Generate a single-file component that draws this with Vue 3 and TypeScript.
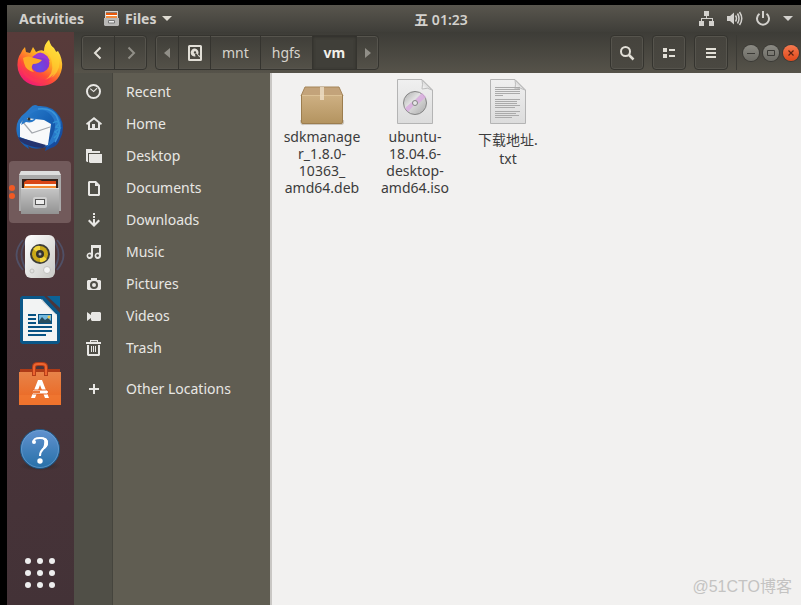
<script setup lang="ts">
interface Place {
  name: string
  path: string
  separated?: boolean
}

interface FileEntry {
  kind: 'package' | 'disc' | 'text'
  lines: string[]
  cjk?: boolean
}

const places: Place[] = [
  {
    name: 'Recent',
    path: 'M7.5 0A7.5 7.5 0 1 0 7.5 15A7.5 7.5 0 1 0 7.5 0ZM7.5 2A5.5 5.5 0 1 1 7.5 13A5.5 5.5 0 1 1 7.5 2ZM4.6 4.3L7.6 6.7L10.7 3.7L11.5 4.5L7.7 8.3L3.9 5.1Z',
  },
  {
    name: 'Home',
    path: 'M8 1L16 7.4L15 9L14 8.2V14H2V8.2L1 9L0 7.4ZM8 3.5L4 6.7V12H6V8H9V12H12V6.7Z',
  },
  {
    name: 'Desktop',
    path: 'M0 1H6V3H14V5H2V14H1L0 13ZM3 6H16V15H4L3 14Z',
  },
  {
    name: 'Documents',
    path: 'M3 1H10L14 5V15L13 16H3L2 15V2ZM4 3V14H12V6H9V3Z',
  },
  {
    name: 'Downloads',
    path: 'M7 1H9V3H7ZM7 4H9V6H7ZM7 7H9V11L12.5 7.5L14 9L8 15L2 9L3.5 7.5L7 11Z',
  },
  {
    name: 'Music',
    path: 'M5 1H15V11.5A3.2 3.2 0 1 1 13 8.8V4H7V11.5A3.2 3.2 0 1 1 5 8.8ZM3.5 10.2A1.4 1.4 0 1 0 3.5 13A1.4 1.4 0 1 0 3.5 10.2ZM11.6 10.2A1.4 1.4 0 1 0 11.6 13A1.4 1.4 0 1 0 11.6 10.2Z',
  },
  {
    name: 'Pictures',
    path: 'M5 2H11V4H14L15 5V13L14 14H2L1 13V5L2 4H5ZM8 5A4 4 0 1 0 8 13A4 4 0 1 0 8 5ZM8 7A2 2 0 1 1 8 11A2 2 0 1 1 8 7Z',
  },
  {
    name: 'Videos',
    path: 'M1 4L5 7V5L6 4H14L15 5V12L14 13H6L5 12V10L1 13Z',
  },
  {
    name: 'Trash',
    path: 'M4 0H12V2H15V4H0V2H4ZM5 1.2V2H11V1.2ZM1 5H3V14H12V5H14V15L13 16H2L1 15ZM5 6H6V12H5ZM7 6H8V12H7ZM9 6H10V12H9Z',
  },
  {
    name: 'Other Locations',
    path: 'M7 3H9V7H13V9H9V13H7V9H3V7H7Z',
    separated: true,
  },
]

const files: FileEntry[] = [
  { kind: 'package', lines: ['sdkmanage', 'r_1.8.0-', '10363_', 'amd64.deb'] },
  { kind: 'disc', lines: ['ubuntu-', '18.04.6-', 'desktop-', 'amd64.iso'] },
  { kind: 'text', lines: ['下载地址.', 'txt'], cjk: true },
]

const gridDots = [10, 22, 34]
const textRows = [
  [9, 25], [11, 25], [13, 25], [15, 25], [17, 8],
  [21, 25], [23, 22], [25, 22], [27, 25], [29, 20],
  [33, 25], [35, 21], [37, 24], [39, 17],
]
</script>

<template>
  <div class="desktop">
    <header class="panel">
      <div class="panel-left">
        <button class="panel-btn">Activities</button>
        <button class="panel-btn app-menu">
          <svg width="15" height="15" viewBox="0 0 15 15">
            <path d="M1 0H14V7H1Z" fill="#d8d5d0" />
            <path d="M2 1.5H13V7H2Z" fill="#4b2b1c" />
            <path d="M2 2H13V4H2Z" fill="#e8590c" />
            <path d="M2 4H13V5H2Z" fill="#fff" />
            <path d="M2 5H13V7H2Z" fill="#f38b3c" />
            <path d="M0 7H15V14L14 15H1L0 14Z" fill="#b9b8b6" />
            <path d="M4.5 9.5H10.5V12H4.5Z" fill="#eee" stroke="#777" />
          </svg>
          <span>Files</span>
          <svg width="10" height="5" viewBox="0 0 10 5"><path d="M0 0H10L5 5Z" fill="#dfdbd2" /></svg>
        </button>
      </div>
      <time class="clock">五 01:23</time>
      <button class="status" aria-label="System">
        <svg width="16" height="16" viewBox="0 0 16 16" fill="#d3d1cd">
          <path d="M5 0H10V5H8V7H14V10H15V15H10V10H13V8H3V10H5V15H0V10H2V7H7V5H5Z" />
        </svg>
        <svg width="16" height="16" viewBox="0 0 16 16">
          <path d="M0 5H3L7 1.5V13.5L3 10H0Z" fill="#d3d1cd" />
          <path d="M8.5 4.5Q10.5 7.5 8.5 10.5M10.5 2.5Q13.5 7.5 10.5 12.5M12.5 1Q17 7.5 12.5 14" fill="none" stroke="#d3d1cd" stroke-width="1.5" />
        </svg>
        <svg width="16" height="16" viewBox="0 0 16 16" fill="none" stroke="#d3d1cd" stroke-width="2">
          <path d="M8 0V7M4.5 2.8A6 6 0 1 0 11.5 2.8" />
        </svg>
        <svg width="10" height="5" viewBox="0 0 10 5"><path d="M0 0H10L5 5Z" fill="#d3d1cd" /></svg>
      </button>
    </header>

    <div class="workspace">
      <nav class="dock" aria-label="Applications">
        <button class="launcher" aria-label="Firefox">
          <svg width="48" height="48" viewBox="0 0 48 48">
            <defs>
              <linearGradient id="fox" x1="0.8" y1="0.1" x2="0.25" y2="1">
                <stop offset="0" stop-color="#fff04a" />
                <stop offset="0.35" stop-color="#ffad22" />
                <stop offset="0.65" stop-color="#ff4e36" />
                <stop offset="1" stop-color="#f0157c" />
              </linearGradient>
              <radialGradient id="globe" cx="0.45" cy="0.7" r="0.8">
                <stop offset="0" stop-color="#654de8" />
                <stop offset="0.55" stop-color="#8137d2" />
                <stop offset="1" stop-color="#b833c8" />
              </radialGradient>
            </defs>
            <path d="M5 13Q6 10 9 7L10 12L14 13L17 7Q19 10 20 12Q25 9 28 11Q28 4 33 0Q34 5 38 8L40 12L42 11Q47 19 46 28Q43 45 25 46Q7 46 2 30Q0 19 5 13Z" fill="url(#fox)" />
            <path d="M29 11Q29 4 33 0Q34 6 39 10Q45 17 43 27Q40 38 29 40Q38 34 36 23Q35 16 29 11Z" fill="#ffd632" opacity="0.65" />
            <circle cx="24" cy="23" r="9.5" fill="url(#globe)" />
            <path d="M18 16Q24 9 31 16L34 21Q28 17 22 18Z" fill="#9a38d5" />
            <path d="M7 18Q12 15 18 18L26 20Q23 24 17 24Q14 28 18 32Q10 31 8 23Z" fill="#ffaa26" />
            <path d="M4 19Q6 34 17 38Q29 43 38 34Q31 47 16 41Q4 35 4 19Z" fill="#ff3656" opacity="0.65" />
          </svg>
        </button>
        <button class="launcher" aria-label="Thunderbird">
          <svg width="50" height="50" viewBox="0 0 50 50">
            <defs>
              <linearGradient id="bird" x1="0" y1="0" x2="1" y2="1">
                <stop offset="0" stop-color="#3187d5" />
                <stop offset="0.5" stop-color="#1763b6" />
                <stop offset="1" stop-color="#173f91" />
              </linearGradient>
            </defs>
            <path d="M15 5Q19 0 23 3Q38 2 45 14Q51 25 45 36Q42 44 36 45L30 48L31 44Q19 48 13 43L14 46Q4 40 2 31Q-1 18 10 10Z" fill="url(#bird)" />
            <path d="M5 21L11 15L29 17L36 21L33 42L28 43L5 34Z" fill="#f8f9fa" />
            <path d="M7 18L17 30L35 24" fill="none" stroke="#a4a8ae" stroke-width="1.2" />
            <path d="M3 34L31 42L28 45Q12 44 5 38Z" fill="#24346f" />
            <path d="M12 16Q15 10 21 8Q29 5 36 12Q43 20 38 31L32 44Q45 37 46 25Q47 11 32 5Q18 2 10 12L6 22L11 19Q20 21 22 13Q18 19 12 16Z" fill="#2878c9" />
            <path d="M23 6Q39 4 43 17Q47 28 40 39" fill="none" stroke="#3a94d8" stroke-width="1.5" />
            <path d="M38 20Q42 17 44 20L41 24L45 25L40 29L43 31L39 35" fill="none" stroke="#3292d4" stroke-width="1.5" />
            <circle cx="14" cy="16" r="1.5" fill="#3b3327" />
          </svg>
        </button>
        <button class="launcher active" aria-label="Files">
          <svg width="48" height="48" viewBox="0 0 48 48">
            <defs>
              <linearGradient id="drawer" x1="0" y1="0" x2="0" y2="1">
                <stop offset="0" stop-color="#c6c6c6" />
                <stop offset="1" stop-color="#929292" />
              </linearGradient>
            </defs>
            <path d="M5 3H43L45 8V43H3V8Z" fill="#aaa" />
            <path d="M5 3H43L45 7H3Z" fill="#dedede" />
            <path d="M6 11H42V21H6Z" fill="#34221c" />
            <path d="M8 14L11 12H24L26 13H40V21H8Z" fill="#d94616" />
            <path d="M8 16H40V21H8Z" fill="#f58a32" />
            <path d="M9 16H40V18H9Z" fill="#fff3e6" />
            <path d="M5 20H43V46H5Z" fill="url(#drawer)" />
            <path d="M5 20H43V21H5Z" fill="#e4e4e4" />
            <rect x="17" y="29" width="14" height="11" rx="2" fill="#d0d0d0" />
            <rect x="19.5" y="31.5" width="9" height="5" fill="#eee" stroke="#555" />
          </svg>
        </button>
        <button class="launcher" aria-label="Rhythmbox">
          <svg width="50" height="48" viewBox="0 0 50 48">
            <defs>
              <linearGradient id="speaker" x1="0" y1="0" x2="1" y2="1">
                <stop offset="0" stop-color="#fff" />
                <stop offset="1" stop-color="#c9c9c5" />
              </linearGradient>
            </defs>
            <path d="M8 8Q-5 23 8 38M12 7Q1 22 12 39M42 8Q55 23 42 38M38 7Q49 22 38 39" fill="none" stroke="#526991" stroke-width="1.8" opacity="0.5" />
            <rect x="10" y="3" width="30" height="43" rx="6" fill="url(#speaker)" />
            <circle cx="25" cy="22" r="10" fill="#3d3d37" />
            <circle cx="25" cy="22" r="8" fill="#c9a817" />
            <path d="M25 22L18 17Q21 13 25 14ZM25 22L32 27Q29 31 25 30Z" fill="#f1d53f" />
            <circle cx="25" cy="22" r="4" fill="#33332e" />
            <circle cx="25" cy="22" r="1.5" fill="#aaa" />
            <circle cx="32" cy="38" r="3.5" fill="#f4f4f4" stroke="#c3c3bf" />
            <circle cx="17" cy="39" r="2" fill="none" stroke="#c2c2be" />
          </svg>
        </button>
        <button class="launcher" aria-label="LibreOffice Writer">
          <svg width="48" height="48" viewBox="0 0 48 48">
            <path d="M6 0H28L44 17V46L42 48H6L4 46V2Z" fill="#0b5788" />
            <path d="M31 0H44V12Z" fill="#0c6296" />
            <path d="M7 3H25L41 19V45H7Z" fill="#f2f3f3" />
            <path d="M26 3V5L39 18H41V20Z" fill="#c8cdd0" />
            <path d="M12 18H20V20H12ZM12 22H20V24H12ZM12 26H20V28H12ZM12 30H36V32H12ZM12 34H36V36H12ZM12 38H30V40H12Z" fill="#075283" />
            <path d="M22 18H36V28H22Z" fill="#075283" />
            <path d="M23 19H35V27H23Z" fill="#73b9de" />
            <path d="M23 27V25L26 21L29 24L32 22L35 25V27Z" fill="#274c5d" />
            <circle cx="33" cy="21" r="1.5" fill="#ecc84a" />
          </svg>
        </button>
        <button class="launcher" aria-label="Ubuntu Software">
          <svg width="48" height="48" viewBox="0 0 48 48">
            <defs>
              <linearGradient id="bag" x1="0" y1="0" x2="0" y2="1">
                <stop offset="0" stop-color="#e78349" />
                <stop offset="1" stop-color="#ec641d" />
              </linearGradient>
            </defs>
            <path d="M4 9H44V15H4Z" fill="#ae3b17" />
            <path d="M3 12H45V45H3Z" fill="url(#bag)" />
            <path d="M3 35H45V45H3Z" fill="#f17933" opacity="0.7" />
            <path d="M18 16V7Q18 4 22 4H26Q30 4 30 7V16" fill="none" stroke="#b53e18" stroke-width="4" />
            <path d="M18 15V7Q18 4 22 4H26Q30 4 30 7V15" fill="none" stroke="#ec6530" stroke-width="2" />
            <path d="M22 20H26L33 38H29L24 25L19 38H15Z" fill="#fff" />
            <rect x="15.5" y="30" width="17" height="4" rx="2" fill="#fff" stroke="#e5601f" />
            <path d="M16 31H24V33H16Z" fill="#ec7637" />
          </svg>
        </button>
        <button class="launcher" aria-label="Help">
          <svg width="48" height="48" viewBox="0 0 48 48">
            <defs>
              <linearGradient id="help" x1="0" y1="0" x2="0" y2="1">
                <stop offset="0" stop-color="#6292cf" />
                <stop offset="1" stop-color="#2670a8" />
              </linearGradient>
              <radialGradient id="help-shadow">
                <stop offset="0.4" stop-color="#29272b" stop-opacity="0.5" />
                <stop offset="1" stop-color="#29272b" stop-opacity="0" />
              </radialGradient>
            </defs>
            <ellipse cx="24" cy="42" rx="21" ry="5" fill="url(#help-shadow)" />
            <circle cx="24" cy="25" r="19.5" fill="url(#help)" stroke="#1c5685" />
            <circle cx="24" cy="25" r="18.5" fill="none" stroke="#75a7d6" opacity="0.6" />
            <path d="M17.5 18Q17 14 24 14Q31 14 31 19Q31 22 27 25Q24 28 24 32" fill="none" stroke="#fff" stroke-width="2" />
            <path d="M24 13Q33 13 32 20Q31 24 26 26Q29 20 28 16Z" fill="#fff" />
            <circle cx="18" cy="18" r="2" fill="#fff" />
            <circle cx="24" cy="37" r="2.7" fill="#fff" />
          </svg>
        </button>
        <button class="launcher show-apps" aria-label="Show Applications">
          <svg width="44" height="44" viewBox="0 0 44 44" fill="#eee">
            <template v-for="y in gridDots" :key="y">
              <circle v-for="x in gridDots" :key="x" :cx="x" :cy="y" r="3" />
            </template>
          </svg>
        </button>
      </nav>

      <section class="window">
        <div class="toolbar">
          <div class="group">
            <button class="tool nav" aria-label="Back">
              <svg width="16" height="16" viewBox="0 0 16 16"><path d="M10.5 2.5L5 8L10.5 13.5" fill="none" stroke="#e2dfd7" stroke-width="2" /></svg>
            </button>
            <button class="tool nav" aria-label="Forward" disabled>
              <svg width="16" height="16" viewBox="0 0 16 16"><path d="M5.5 2.5L11 8L5.5 13.5" fill="none" stroke="#918f88" stroke-width="2" /></svg>
            </button>
          </div>
          <div class="group path">
            <button class="tool scroll" aria-label="Scroll left">
              <svg width="6" height="10" viewBox="0 0 6 10"><path d="M6 0V10L0 5Z" fill="#918f88" /></svg>
            </button>
            <button class="tool disk" aria-label="Computer">
              <svg width="16" height="16" viewBox="0 0 16 16">
                <rect x="2" y="1" width="12" height="14" rx="0.5" fill="none" stroke="#e2dfd7" stroke-width="2" />
                <path d="M8 3.5A4 4 0 1 0 8.5 11.4L8 9L9.5 8.5L12.5 12.5L13 11L11 9.5A4 4 0 0 0 8 3.5ZM8 6.2A1.2 1.2 0 1 1 8 8.6A1.2 1.2 0 1 1 8 6.2Z" fill="#e2dfd7" fill-rule="evenodd" />
              </svg>
            </button>
            <button class="tool crumb">mnt</button>
            <button class="tool crumb">hgfs</button>
            <button class="tool crumb current">vm</button>
            <button class="tool scroll" aria-label="Scroll right">
              <svg width="6" height="10" viewBox="0 0 6 10"><path d="M0 0V10L6 5Z" fill="#918f88" /></svg>
            </button>
          </div>
          <div class="actions">
            <button class="tool single" aria-label="Search">
              <svg width="16" height="16" viewBox="0 0 16 16" fill="none" stroke="#e2dfd7"><circle cx="6.5" cy="6.5" r="4.5" stroke-width="2" /><path d="M10 10L14.5 14.5" stroke-width="2.5" /></svg>
            </button>
            <button class="tool single" aria-label="View options">
              <svg width="16" height="16" viewBox="0 0 16 16" fill="#e2dfd7"><path d="M2 3H6V7H2ZM8 4H14V6H8ZM2 9H6V13H2ZM8 10H14V12H8Z" /></svg>
            </button>
            <button class="tool single" aria-label="Menu">
              <svg width="16" height="16" viewBox="0 0 16 16" fill="#e2dfd7"><path d="M3 3H13V5H3ZM3 7H13V9H3ZM3 11H13V13H3Z" /></svg>
            </button>
            <div class="controls">
              <button class="control" aria-label="Minimize"><svg width="8" height="8" viewBox="0 0 8 8"><path d="M0 4.5H8" stroke="#3b3a36" /></svg></button>
              <button class="control" aria-label="Maximize"><svg width="8" height="8" viewBox="0 0 8 8"><path d="M0.5 1.5H7.5V6.5H0.5Z" fill="none" stroke="#3b3a36" /></svg></button>
              <button class="control close" aria-label="Close"><svg width="8" height="8" viewBox="0 0 8 8"><path d="M1.5 1.5L6.5 6.5M6.5 1.5L1.5 6.5" stroke="#5a2212" stroke-width="1.2" /></svg></button>
            </div>
          </div>
        </div>

        <div class="body">
          <nav class="sidebar" aria-label="Places">
            <a v-for="place in places" :key="place.name" href="#" class="place" :class="{ separated: place.separated }">
              <svg width="16" height="16" viewBox="0 0 16 16"><path :d="place.path" fill="#e8e7e4" fill-rule="evenodd" /></svg>
              <span class="place-name">{{ place.name }}</span>
            </a>
          </nav>
          <main class="files">
            <button v-for="file in files" :key="file.kind" class="file">
              <svg v-if="file.kind === 'package'" width="48" height="48" viewBox="0 0 48 48">
                <defs>
                  <linearGradient id="box" x1="0" y1="0" x2="0" y2="1">
                    <stop offset="0" stop-color="#ceb083" />
                    <stop offset="1" stop-color="#b3935f" />
                  </linearGradient>
                </defs>
                <path d="M2 42Q2 48 6 47H43Q47 47 46 42Z" fill="#a49b8d" opacity="0.5" />
                <path d="M7 9H41L45 18H3Z" fill="#c3a37a" stroke="#a58559" />
                <path d="M3 17H45V44L44 46H4L3 44Z" fill="url(#box)" />
                <path d="M3.5 17V44L4.5 45.5H43.5L44.5 44V17" fill="none" stroke="#9c7d4e" />
                <path d="M4 17.5H44" stroke="#dcc195" />
                <path d="M22 9H26V22H22Z" fill="#eddfc8" opacity="0.8" />
              </svg>
              <svg v-else width="48" height="48" viewBox="0 0 48 48">
                <defs>
                  <linearGradient :id="'paper-' + file.kind" x1="0" y1="0" x2="0" y2="1">
                    <stop offset="0" stop-color="#f0f0f0" />
                    <stop offset="1" stop-color="#dcdcdc" />
                  </linearGradient>
                  <linearGradient :id="'fold-' + file.kind" x1="0" y1="1" x2="1" y2="0">
                    <stop offset="0" stop-color="#fff" />
                    <stop offset="0.6" stop-color="#d2d2d2" />
                  </linearGradient>
                  <linearGradient id="disc" x1="0" y1="0" x2="1" y2="1">
                    <stop offset="0" stop-color="#aaa" />
                    <stop offset="0.4" stop-color="#e2e2e2" />
                    <stop offset="1" stop-color="#aaa" />
                  </linearGradient>
                </defs>
                <path d="M6.5 1.5H31L41.5 12V45.5H6.5Z" :fill="'url(#paper-' + file.kind + ')'" stroke="#b4b4b4" />
                <path d="M31 2Q32 6 31 11Q37 9 41 12Z" :fill="'url(#fold-' + file.kind + ')'" stroke="#bdbdbd" />
                <g v-if="file.kind === 'disc'">
                  <circle cx="24" cy="25" r="11.5" fill="url(#disc)" stroke="#858585" />
                  <path d="M14 30L21.5 23.5L24 26L17 34ZM24 22L31 15L35 19L27 26Z" fill="#d9aae0" opacity="0.8" />
                  <circle cx="24" cy="25" r="2.5" fill="#e6e6e6" stroke="#858585" />
                </g>
                <g v-else>
                  <rect v-for="row in textRows" :key="row[0]" x="11" :y="row[0]" :width="row[1]" height="1" fill="#aaa" />
                </g>
              </svg>
              <span class="label" :class="{ cjk: file.cjk }">{{ file.lines.join('\n') }}</span>
            </button>
            <p class="credit">@51CTO博客</p>
          </main>
        </div>
      </section>
    </div>
  </div>
</template>

<style>
body {
  margin: 0;
  background: #000;
}
</style>

<style scoped>
.desktop {
  box-sizing: border-box;
  min-height: 100vh;
  padding: 5px 0 0 7px;
  display: flex;
  flex-direction: column;
  background: #000;
  font-family: "Noto Sans", "Noto Sans CJK SC", sans-serif;
  font-size: 14px;
  color: #e3e1dc;
}

svg {
  display: block;
  flex: none;
}

button {
  margin: 0;
  padding: 0;
  border: 0;
  background: none;
  color: inherit;
  font: inherit;
}

.panel {
  height: 27px;
  display: grid;
  grid-template-columns: 11fr auto 9fr;
  align-items: center;
  background: linear-gradient(#59564e, #3f3e39);
  color: #d3d1cd;
  font-weight: 600;
}

.panel-left {
  display: flex;
  gap: 20px;
  padding-left: 12px;
  font-weight: 700;
}

.app-menu {
  display: flex;
  align-items: center;
  gap: 6px;
}

.status {
  justify-self: end;
  display: flex;
  align-items: center;
  gap: 12px;
  padding-right: 8px;
}

.workspace {
  flex: 1;
  display: flex;
}

.dock {
  flex: none;
  width: 67px;
  box-sizing: border-box;
  padding: 1px 3px 1px 2px;
  display: flex;
  flex-direction: column;
  align-items: center;
  gap: 2px;
  background: linear-gradient(#583b3a, #4c353a 50%, #433237);
}

.launcher {
  width: 62px;
  height: 62px;
  display: grid;
  place-items: center;
  border-radius: 4px;
}

.launcher.active {
  position: relative;
  background: #725a5b;
}

.launcher.active::before,
.launcher.active::after {
  content: "";
  position: absolute;
  left: 0;
  width: 6px;
  height: 6px;
  border-radius: 50%;
  background: #f15a24;
}

.launcher.active::before {
  top: 24px;
}

.launcher.active::after {
  top: 32px;
}

.show-apps {
  margin-top: auto;
}

.window {
  flex: 1;
  min-width: 0;
  display: flex;
  flex-direction: column;
}

.toolbar {
  height: 41px;
  box-sizing: border-box;
  padding: 3px 2px 3px 7px;
  display: flex;
  gap: 8px;
  background: linear-gradient(#3d3c37, #56534a);
}

.group {
  display: flex;
  border-radius: 4px;
  border: 1px solid #35342f;
  box-shadow: inset 0 0 0 1px #56544d;
}

.tool {
  display: flex;
  align-items: center;
  justify-content: center;
}

.tool + .tool {
  border-left: 1px solid #35342f;
}

.nav {
  width: 32px;
}

.scroll {
  width: 22px;
}

.disk {
  width: 32px;
}

.crumb {
  padding: 0 11px;
  color: #d6d3cc;
}

.current {
  background: #403f39;
  box-shadow: inset 0 1px 3px #2f2e2a;
  font-weight: 700;
  color: #f0eee9;
}

.actions {
  margin-left: auto;
  display: flex;
  gap: 8px;
}

.actions .single {
  width: 34px;
  box-sizing: border-box;
  border: 1px solid #35342f;
  border-radius: 4px;
  background: linear-gradient(#45433d, #4a4841);
  box-shadow: inset 0 0 0 1px #56544d;
}

.controls {
  display: flex;
  align-items: center;
  gap: 4px;
  padding-left: 6px;
  border-left: 1px solid #3b3a35;
}

.control {
  width: 16px;
  height: 16px;
  display: grid;
  place-items: center;
  border-radius: 50%;
  background: linear-gradient(#8b8a83, #6c6b65);
  box-shadow: 0 0 0 1px #3b3a36;
}

.close {
  background: linear-gradient(#f4794f, #e0481a);
}

.body {
  flex: 1;
  display: flex;
}

.sidebar {
  flex: none;
  width: 198px;
  box-sizing: border-box;
  padding-top: 3px;
  border-right: 2px solid #c9c7c4;
  background: linear-gradient(to right, #504f47 38px, #45443d 38px, #45443d 39px, #605d52 39px);
}

.place {
  height: 32px;
  padding-left: 12px;
  display: flex;
  align-items: center;
  gap: 24px;
  color: #e8e7e4;
  text-decoration: none;
}

.place-name {
  padding-bottom: 2px;
}

.separated {
  margin-top: 9px;
}

.files {
  flex: 1;
  display: flex;
  align-items: flex-start;
  gap: 7px;
  position: relative;
  padding: 5px 7px;
  background: #f2f1f0;
}

.file {
  width: 86px;
  display: flex;
  flex-direction: column;
  align-items: center;
  gap: 2px;
  color: #3c3c3c;
}

.label {
  line-height: 17px;
  white-space: pre;
}

.label.cjk {
  padding-top: 2px;
  line-height: 19px;
}

.credit {
  position: absolute;
  right: 9px;
  bottom: 8px;
  margin: 0;
  font-family: "Liberation Sans", "Noto Sans CJK SC", sans-serif;
  font-size: 16px;
  line-height: 20px;
  color: #c4c3c2;
}
</style>
